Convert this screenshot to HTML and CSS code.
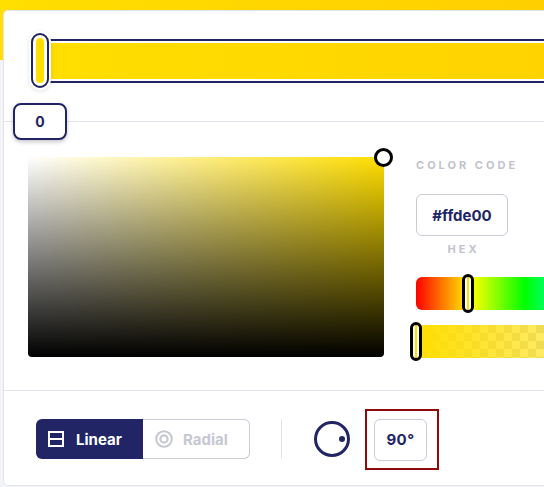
FILE: index.html
```html
<!DOCTYPE html>
<html lang="en">
<head>
    <meta charset="UTF-8">
    <meta name="viewport" content="width=device-width, initial-scale=1.0">
    <title>Gradient Picker</title>
    <link rel="stylesheet" href="styles.css">
</head>
<body>
    <main class="palco">
        <div class="painel">
            <section class="paradas">
                <div class="barra"></div>
                <div class="parada"></div>
                <div class="rotuloParada">0</div>
            </section>
            <section class="seletor">
                <div class="saturacao">
                    <span class="mira"></span>
                </div>
                <div class="codigo">
                    <div class="legenda">COLOR CODE</div>
                    <div class="campoHex">#ffde00</div>
                    <div class="legenda legendaHex">HEX</div>
                    <div class="trilho matiz"><span class="alca"></span></div>
                    <div class="trilho alfa"><span class="alca"></span></div>
                </div>
            </section>
            <section class="modo">
                <div class="alternar">
                    <button class="ativo">
                        <svg width="16" height="16" viewBox="0 0 16 16">
                            <rect x="1" y="1" width="14" height="14" fill="none" stroke="#fff" stroke-width="2"/>
                            <line x1="1" y1="8" x2="15" y2="8" stroke="#fff" stroke-width="2"/>
                        </svg>
                        Linear
                    </button>
                    <button class="inativo">
                        <svg width="18" height="18" viewBox="0 0 18 18">
                            <circle cx="9" cy="9" r="7.8" fill="none" stroke="#c6c8d1" stroke-width="2"/>
                            <circle cx="9" cy="9" r="3.6" fill="none" stroke="#c6c8d1" stroke-width="2.2"/>
                        </svg>
                        Radial
                    </button>
                </div>
                <div class="divisor"></div>
                <div class="angulo"><span class="ponto"></span></div>
                <div class="caixaAngulo">
                    <div class="campoAngulo">90°</div>
                </div>
            </section>
        </div>
    </main>
</body>
</html>
```

FILE: styles.css
```css
* {
    padding: 0;
    margin: 0;
    border: none;
    box-sizing: border-box;
}
body {
    width: 544px;
    height: 487px;
    overflow: hidden;
    font-family: Inter, "Liberation Sans", sans-serif;
    color: #212566;
    background:
        linear-gradient(rgba(0,0,0,0) 60px, #f3f4f7 60px),
        linear-gradient(90deg, #ffde00, #ffcf00);
}
.palco {
    padding: 10px 0 0 3px;
}
.painel {
    width: 541px;
    height: 476px;
    overflow: hidden;
    background-color: #fff;
    border: 1px solid #e3e4ea;
    border-right: none;
    border-radius: 5px 0 0 5px;
}

/* barra de paradas */
.paradas {
    position: relative;
    height: 111px;
    padding: 28px 0 0 46px;
    border-bottom: 1px solid #e3e4ea;
}
.barra {
    height: 44px;
    border: 2px solid #212566;
    border-left: none;
    border-right: none;
    box-shadow: inset 0 2px 0 #fff, inset 0 -2px 0 #fff;
    background: linear-gradient(90deg, #ffde00, #ffd300);
}
.parada {
    position: absolute;
    left: 27px;
    top: 22px;
    width: 18px;
    height: 55px;
    border: 2px solid #212566;
    border-radius: 9px;
    background-color: #ffde00;
    box-shadow: inset 0 0 0 3px #fff, 0 0 0 2px #fff, 0 1px 4px 2px rgba(0,0,0,.12);
}
.rotuloParada {
    position: absolute;
    left: 9px;
    top: 92px;
    z-index: 2;
    display: flex;
    justify-content: center;
    align-items: center;
    width: 54px;
    height: 37px;
    border: 2px solid #212566;
    border-radius: 8px;
    background-color: #fff;
    box-shadow: 0 2px 4px rgba(0,0,0,.22);
    font-size: 14px;
    font-weight: 700;
}

/* seletor de cor */
.seletor {
    display: flex;
    height: 269px;
    padding: 35px 0 0 24px;
    border-bottom: 1px solid #e3e4ea;
}
.saturacao {
    position: relative;
    flex-shrink: 0;
    width: 356px;
    height: 200px;
    border-radius: 4px;
    background:
        linear-gradient(0deg, #000, rgba(0,0,0,0)),
        linear-gradient(90deg, #fff, rgba(255,255,255,0)),
        #ffde00;
}
.mira {
    position: absolute;
    left: 346px;
    top: -9px;
    width: 19px;
    height: 19px;
    border: 3px solid #000;
    border-radius: 50%;
    background-color: #fff;
}
.codigo {
    flex-shrink: 0;
    margin: 1px 0 0 32px;
    width: 330px;
}
.legenda {
    font-size: 11px;
    line-height: 14px;
    font-weight: 700;
    letter-spacing: 3px;
    color: #c1c3cd;
}
.campoHex {
    display: flex;
    justify-content: center;
    align-items: center;
    margin-top: 22px;
    width: 92px;
    height: 42px;
    border: 1px solid #c9cbd5;
    border-radius: 6px;
    font-size: 15px;
    font-weight: 700;
}
.legendaHex {
    margin-top: 6px;
    width: 92px;
    padding-left: 3px;
    text-align: center;
}
.trilho {
    position: relative;
    height: 33px;
    border-radius: 6px;
}
.matiz {
    margin-top: 21px;
    background: linear-gradient(90deg, #f00, #ff0 17%, #0f0 33%, #0ff 50%, #00f 67%, #f0f 83%, #f00);
}
.alfa {
    margin-top: 15px;
    background:
        linear-gradient(90deg, #ffde00, rgba(255,222,0,0)),
        linear-gradient(45deg, #d9d9d9 25%, rgba(0,0,0,0) 25%, rgba(0,0,0,0) 75%, #d9d9d9 75%),
        linear-gradient(45deg, #d9d9d9 25%, #fff 25%, #fff 75%, #d9d9d9 75%);
    background-size: 100% 100%, 16px 16px, 16px 16px;
    background-position: 0 0, 0 0, 8px 8px;
}
.alca {
    position: absolute;
    top: -3px;
    width: 12px;
    height: 39px;
    border: 3px solid #000;
    border-radius: 6px;
    background: linear-gradient(90deg, #fff 2px, #ffde00 2px, #ffde00 4px, #fff 4px);
}
.matiz .alca {
    left: 46px;
}
.alfa .alca {
    left: -6px;
}

/* tipo e angulo */
.modo {
    display: flex;
    align-items: center;
    height: 94px;
    padding: 2px 0 0 32px;
}
.alternar {
    display: flex;
}
.alternar button {
    display: flex;
    align-items: center;
    width: 107px;
    height: 40px;
    padding-left: 12px;
    font-family: Inter, "Liberation Sans", sans-serif;
    font-size: 15px;
    font-weight: 700;
}
.ativo {
    gap: 12px;
    background-color: #212566;
    color: #fff;
    border-radius: 6px 0 0 6px;
}
.inativo {
    gap: 10px;
    background-color: #fff;
    color: #c6c8d1;
    border: 1px solid #c9cbd5 !important;
    border-left: none !important;
    border-radius: 0 6px 6px 0;
}
.divisor {
    width: 1px;
    height: 40px;
    margin-left: 31px;
    background-color: #e3e4ea;
}
.angulo {
    position: relative;
    width: 36px;
    height: 36px;
    margin-left: 32px;
    border: 3px solid #212566;
    border-radius: 50%;
}
.ponto {
    position: absolute;
    right: 2px;
    top: 12px;
    width: 6px;
    height: 6px;
    border-radius: 50%;
    background-color: #212566;
}
.caixaAngulo {
    margin-left: 15px;
    padding: 8px 10px 7px 7px;
    border: 2px solid #8d0b0b;
}
.campoAngulo {
    display: flex;
    justify-content: center;
    align-items: center;
    width: 53px;
    height: 42px;
    border: 1px solid #c9cbd5;
    border-radius: 6px;
    font-size: 15px;
    font-weight: 700;
    letter-spacing: .5px;
}
```
